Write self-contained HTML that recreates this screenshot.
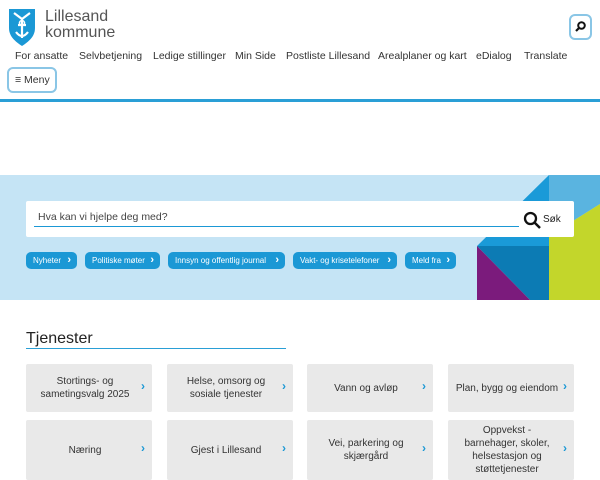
<!DOCTYPE html>
<html><head><meta charset="utf-8"><style>
*{box-sizing:border-box;margin:0;padding:0}
body{width:600px;height:480px;overflow:hidden;background:#fff;font-family:"Liberation Sans",sans-serif;color:#333;position:relative}
.a{position:absolute}
.nav span{position:absolute;top:50px;font-size:10.5px;color:#333;white-space:nowrap}
.btn{position:absolute;top:252px;height:17px;background:#1b98d5;color:#fff;font-size:8px;border-radius:5px;line-height:17px;padding-left:7px;white-space:nowrap}
.btn:after{content:"›";position:absolute;right:6px;font-weight:bold;font-size:11px;top:0px}
.card{position:absolute;width:126px;background:#e9e9e9;border-radius:2px;display:flex;align-items:center;justify-content:center;text-align:center;font-size:10px;line-height:13px;color:#333;padding:0 15px 0 7px}
.card:after{content:"›";position:absolute;right:7px;top:50%;margin-top:-8px;color:#1b98d5;font-weight:bold;font-size:12px}
</style></head><body>
<svg class="a" style="left:8px;top:8px" width="28" height="38" viewBox="0 0 28 38">
<path d="M1 1 H27 V20 C27 29 20 34 14 38 C8 34 1 29 1 20 Z" fill="#1b98d5"/>
<path d="M6 5 L14 11 L22 5 M14 11 V30 M8 24 Q14 32 20 24 M10 17 H18" stroke="#fff" stroke-width="2.2" fill="none"/>
<circle cx="14" cy="15" r="2.5" fill="none" stroke="#fff" stroke-width="1.5"/>
</svg>
<div class="a" style="left:45px;top:9px;font-size:16px;line-height:16px;color:#555">Lillesand<br>kommune</div>
<div class="a" style="left:569px;top:14px;width:23px;height:26px;border:2px solid #8ac6e6;border-radius:6px"></div>
<svg class="a" style="left:574px;top:20px" width="13" height="13" viewBox="0 0 13 13"><circle cx="7.5" cy="5.5" r="3.3" fill="none" stroke="#111" stroke-width="2"/><path d="M5 8 L2 11" stroke="#111" stroke-width="2.2"/></svg>
<div class="nav">
<span style="left:15px">For ansatte</span><span style="left:79px">Selvbetjening</span><span style="left:153px">Ledige stillinger</span><span style="left:235px">Min Side</span><span style="left:286px">Postliste Lillesand</span><span style="left:378px">Arealplaner og kart</span><span style="left:476px">eDialog</span><span style="left:524px">Translate</span>
</div>
<div class="a" style="left:7px;top:67px;width:50px;height:26px;border:2px solid #8ac6e6;border-radius:6px;font-size:10.5px;line-height:22px;padding-left:6px">≡ Meny</div>
<div class="a" style="left:0;top:99px;width:600px;height:3px;background:#2a9fd6"></div>

<div class="a" style="left:0;top:175px;width:600px;height:125px;background:#c5e4f5"></div>
<svg class="a" style="left:470px;top:175px" width="130" height="125" viewBox="470 175 130 125">
<polygon points="549,175 549,246 477,246" fill="#1a9ad8"/>
<polygon points="549,175 600,175 600,204 549,236" fill="#5ab4e0"/>
<polygon points="549,236 600,204 600,300 549,300" fill="#c3d62b"/>
<polygon points="477,246 549,246 549,300 530,300" fill="#0c7bb4"/>
<polygon points="477,246 530,300 477,300" fill="#7b1b7c"/>
</svg>
<div class="a" style="left:26px;top:201px;width:548px;height:36px;background:#fff;border-radius:2px"></div>
<div class="a" style="left:38px;top:211px;font-size:10.5px;color:#444">Hva kan vi hjelpe deg med?</div>
<div class="a" style="left:34px;top:226px;width:485px;height:1px;background:#1b98d5"></div>
<svg class="a" style="left:523px;top:211px" width="19" height="19" viewBox="0 0 19 19"><circle cx="7.5" cy="7.5" r="5.5" fill="none" stroke="#111" stroke-width="2.3"/><path d="M11.5 11.5 L17 17" stroke="#111" stroke-width="2.5"/></svg>
<div class="a" style="left:543px;top:214px;font-size:10px;color:#222">Søk</div>
<div class="btn" style="left:26px;width:51px">Nyheter</div>
<div class="btn" style="left:85px;width:75px">Politiske møter</div>
<div class="btn" style="left:168px;width:117px">Innsyn og offentlig journal</div>
<div class="btn" style="left:293px;width:104px">Vakt- og krisetelefoner</div>
<div class="btn" style="left:405px;width:51px">Meld fra</div>

<div class="a" style="left:26px;top:330px;font-size:16px;color:#222">Tjenester</div>
<div class="a" style="left:26px;top:348px;width:260px;height:1px;background:#2a9fd6"></div>
<div class="card" style="left:26px;top:364px;height:48px">Stortings- og sametingsvalg 2025</div>
<div class="card" style="left:167px;top:364px;height:48px">Helse, omsorg og sosiale tjenester</div>
<div class="card" style="left:307px;top:364px;height:48px">Vann og avløp</div>
<div class="card" style="left:448px;top:364px;height:48px">Plan, bygg og eiendom</div>
<div class="card" style="left:26px;top:420px;height:60px">Næring</div>
<div class="card" style="left:167px;top:420px;height:60px">Gjest i Lillesand</div>
<div class="card" style="left:307px;top:420px;height:60px">Vei, parkering og skjærgård</div>
<div class="card" style="left:448px;top:420px;height:60px">Oppvekst - barnehager, skoler, helsestasjon og støttetjenester</div>
</body></html>
